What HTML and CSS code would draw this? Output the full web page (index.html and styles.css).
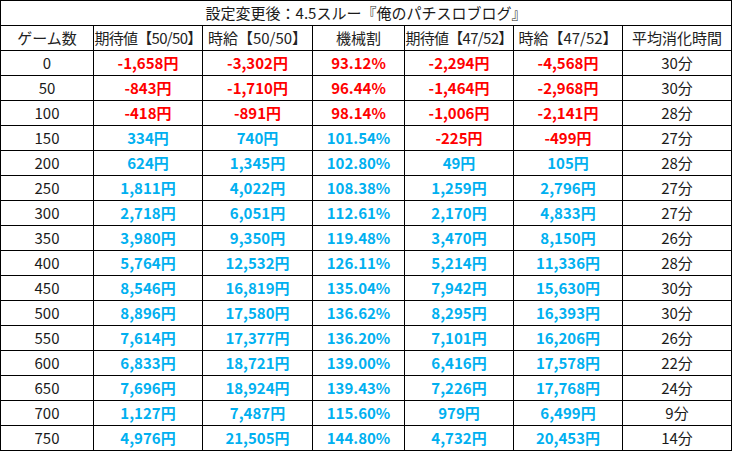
FILE: index.html
```html
<!DOCTYPE html>
<html lang="ja">
<head>
<meta charset="utf-8">
<link rel="stylesheet" href="styles.css">
</head>
<body>
<div class="sheet">
  <div class="cell title"><span>設定変更後：4.5スルー『俺のパチスロブログ』</span></div>
  <div class="cell head"><span>ゲーム数</span></div>
  <div class="cell head tight"><span>期待値【50/50】</span></div>
  <div class="cell head"><span>時給【50/50】</span></div>
  <div class="cell head"><span>機械割</span></div>
  <div class="cell head tight"><span>期待値【47/52】</span></div>
  <div class="cell head"><span>時給【47/52】</span></div>
  <div class="cell head"><span>平均消化時間</span></div>

  <div class="cell"><span>0</span></div>
  <div class="cell neg"><span>-1,658円</span></div>
  <div class="cell neg"><span>-3,302円</span></div>
  <div class="cell neg"><span>93.12%</span></div>
  <div class="cell neg"><span>-2,294円</span></div>
  <div class="cell neg"><span>-4,568円</span></div>
  <div class="cell"><span>30分</span></div>

  <div class="cell"><span>50</span></div>
  <div class="cell neg"><span>-843円</span></div>
  <div class="cell neg"><span>-1,710円</span></div>
  <div class="cell neg"><span>96.44%</span></div>
  <div class="cell neg"><span>-1,464円</span></div>
  <div class="cell neg"><span>-2,968円</span></div>
  <div class="cell"><span>30分</span></div>

  <div class="cell"><span>100</span></div>
  <div class="cell neg"><span>-418円</span></div>
  <div class="cell neg"><span>-891円</span></div>
  <div class="cell neg"><span>98.14%</span></div>
  <div class="cell neg"><span>-1,006円</span></div>
  <div class="cell neg"><span>-2,141円</span></div>
  <div class="cell"><span>28分</span></div>

  <div class="cell"><span>150</span></div>
  <div class="cell pos"><span>334円</span></div>
  <div class="cell pos"><span>740円</span></div>
  <div class="cell pos"><span>101.54%</span></div>
  <div class="cell neg"><span>-225円</span></div>
  <div class="cell neg"><span>-499円</span></div>
  <div class="cell"><span>27分</span></div>

  <div class="cell"><span>200</span></div>
  <div class="cell pos"><span>624円</span></div>
  <div class="cell pos"><span>1,345円</span></div>
  <div class="cell pos"><span>102.80%</span></div>
  <div class="cell pos"><span>49円</span></div>
  <div class="cell pos"><span>105円</span></div>
  <div class="cell"><span>28分</span></div>

  <div class="cell"><span>250</span></div>
  <div class="cell pos"><span>1,811円</span></div>
  <div class="cell pos"><span>4,022円</span></div>
  <div class="cell pos"><span>108.38%</span></div>
  <div class="cell pos"><span>1,259円</span></div>
  <div class="cell pos"><span>2,796円</span></div>
  <div class="cell"><span>27分</span></div>

  <div class="cell"><span>300</span></div>
  <div class="cell pos"><span>2,718円</span></div>
  <div class="cell pos"><span>6,051円</span></div>
  <div class="cell pos"><span>112.61%</span></div>
  <div class="cell pos"><span>2,170円</span></div>
  <div class="cell pos"><span>4,833円</span></div>
  <div class="cell"><span>27分</span></div>

  <div class="cell"><span>350</span></div>
  <div class="cell pos"><span>3,980円</span></div>
  <div class="cell pos"><span>9,350円</span></div>
  <div class="cell pos"><span>119.48%</span></div>
  <div class="cell pos"><span>3,470円</span></div>
  <div class="cell pos"><span>8,150円</span></div>
  <div class="cell"><span>26分</span></div>

  <div class="cell"><span>400</span></div>
  <div class="cell pos"><span>5,764円</span></div>
  <div class="cell pos"><span>12,532円</span></div>
  <div class="cell pos"><span>126.11%</span></div>
  <div class="cell pos"><span>5,214円</span></div>
  <div class="cell pos"><span>11,336円</span></div>
  <div class="cell"><span>28分</span></div>

  <div class="cell"><span>450</span></div>
  <div class="cell pos"><span>8,546円</span></div>
  <div class="cell pos"><span>16,819円</span></div>
  <div class="cell pos"><span>135.04%</span></div>
  <div class="cell pos"><span>7,942円</span></div>
  <div class="cell pos"><span>15,630円</span></div>
  <div class="cell"><span>30分</span></div>

  <div class="cell"><span>500</span></div>
  <div class="cell pos"><span>8,896円</span></div>
  <div class="cell pos"><span>17,580円</span></div>
  <div class="cell pos"><span>136.62%</span></div>
  <div class="cell pos"><span>8,295円</span></div>
  <div class="cell pos"><span>16,393円</span></div>
  <div class="cell"><span>30分</span></div>

  <div class="cell"><span>550</span></div>
  <div class="cell pos"><span>7,614円</span></div>
  <div class="cell pos"><span>17,377円</span></div>
  <div class="cell pos"><span>136.20%</span></div>
  <div class="cell pos"><span>7,101円</span></div>
  <div class="cell pos"><span>16,206円</span></div>
  <div class="cell"><span>26分</span></div>

  <div class="cell"><span>600</span></div>
  <div class="cell pos"><span>6,833円</span></div>
  <div class="cell pos"><span>18,721円</span></div>
  <div class="cell pos"><span>139.00%</span></div>
  <div class="cell pos"><span>6,416円</span></div>
  <div class="cell pos"><span>17,578円</span></div>
  <div class="cell"><span>22分</span></div>

  <div class="cell"><span>650</span></div>
  <div class="cell pos"><span>7,696円</span></div>
  <div class="cell pos"><span>18,924円</span></div>
  <div class="cell pos"><span>139.43%</span></div>
  <div class="cell pos"><span>7,226円</span></div>
  <div class="cell pos"><span>17,768円</span></div>
  <div class="cell"><span>24分</span></div>

  <div class="cell"><span>700</span></div>
  <div class="cell pos"><span>1,127円</span></div>
  <div class="cell pos"><span>7,487円</span></div>
  <div class="cell pos"><span>115.60%</span></div>
  <div class="cell pos"><span>979円</span></div>
  <div class="cell pos"><span>6,499円</span></div>
  <div class="cell"><span>9分</span></div>

  <div class="cell"><span>750</span></div>
  <div class="cell pos"><span>4,976円</span></div>
  <div class="cell pos"><span>21,505円</span></div>
  <div class="cell pos"><span>144.80%</span></div>
  <div class="cell pos"><span>4,732円</span></div>
  <div class="cell pos"><span>20,453円</span></div>
  <div class="cell"><span>14分</span></div>
</div>
</body>
</html>
```

FILE: styles.css
```css
html, body {
  margin: 0;
  padding: 0;
  background: #ffffff;
}

.sheet {
  display: grid;
  grid-template-columns: 92px 108px 109px 91px 108px 108px 108px;
  grid-auto-rows: 24px;
  gap: 1px;
  padding: 1px;
  width: 732px;
  box-sizing: border-box;
  background: #000000;
  font-family: "Noto Sans CJK JP", "Noto Sans", sans-serif;
  font-size: 15px;
  color: #1a1a1a;
}

.cell {
  background: #ffffff;
  display: flex;
  align-items: center;
  justify-content: center;
  overflow: hidden;
  white-space: nowrap;
  line-height: 24px;
}

.cell span {
  flex: none;
}

.title {
  grid-column: 1 / -1;
}

.head {
  color: #222222;
}

.tight {
  letter-spacing: -0.7px;
}

.neg {
  color: #ff0000;
  font-weight: bold;
}

.pos {
  color: #00b0f0;
  font-weight: bold;
}
```
